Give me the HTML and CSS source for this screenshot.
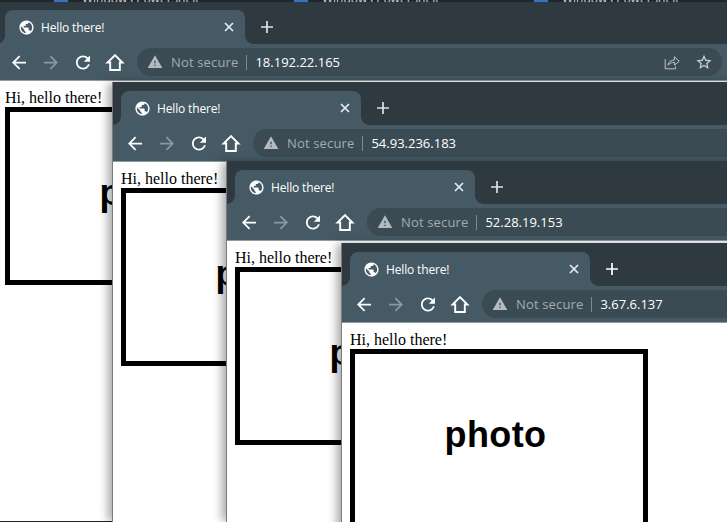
FILE: index.html
```html
<!DOCTYPE html>
<html lang="en">
<head>
  <meta charset="UTF-8">
  <title>Hello there!</title>
  <link rel="stylesheet" href="styles.css">
</head>
<body>
  <svg class="sprite" width="0" height="0">
    <symbol id="globe" viewBox="0 0 24 24"><path fill="currentColor" d="M12 2C6.48 2 2 6.48 2 12s4.48 10 10 10 10-4.48 10-10S17.52 2 12 2zm-1 17.93c-3.95-.49-7-3.85-7-7.93 0-.62.08-1.21.21-1.79L9 15v1c0 1.1.9 2 2 2v1.93zm6.9-2.54c-.26-.81-1-1.39-1.9-1.39h-1v-3c0-.55-.45-1-1-1H8v-2h2c.55 0 1-.45 1-1V7h2c1.1 0 2-.9 2-2v-.41c2.93 1.19 5 4.06 5 7.41 0 2.08-.8 3.97-2.1 5.39z"/></symbol>
    <symbol id="close" viewBox="0 0 12 12"><path stroke="currentColor" stroke-width="1.7" fill="none" d="M2 2l8 8M10 2l-8 8"/></symbol>
    <symbol id="plus" viewBox="0 0 12 12"><path stroke="currentColor" stroke-width="1.7" fill="none" d="M6 0v12M0 6h12"/></symbol>
    <symbol id="arrow" viewBox="0 0 24 24"><path fill="currentColor" d="M20 11H7.83l5.59-5.59L12 4l-8 8 8 8 1.41-1.41L7.83 13H20v-2z"/></symbol>
    <symbol id="reload" viewBox="0 0 24 24"><path fill="currentColor" d="M17.65 6.35C16.2 4.9 14.21 4 12 4c-4.42 0-7.99 3.58-7.99 8s3.57 8 7.99 8c3.73 0 6.84-2.55 7.73-6h-2.08c-.82 2.33-3.04 4-5.65 4-3.31 0-6-2.69-6-6s2.69-6 6-6c1.66 0 3.14.69 4.22 1.78L13 11h7V4l-2.35 2.35z"/></symbol>
    <symbol id="home" viewBox="0 0 24 24"><path fill="none" stroke="currentColor" stroke-width="2.2" d="M12 3.5 3.5 12h3v8.5h11V12h3z"/></symbol>
    <symbol id="warn" viewBox="0 0 24 24"><path fill="currentColor" d="M1 21h22L12 2 1 21zm12-3h-2v-2h2v2zm0-4h-2v-4h2v4z"/></symbol>
    <symbol id="share" viewBox="0 0 20 20"><path fill="none" stroke="currentColor" stroke-width="1.2" d="M1.5 6.500v12h13v-3M5 14c.5-4 3.500-6.500 8-6.500V3.500l6 5.500-6 5v-3.500c-3.500 0-6 1-8 3.500z"/></symbol>
    <symbol id="star" viewBox="0 0 24 24"><path fill="none" stroke="currentColor" stroke-width="2" d="M12 3.500l2.600 5.900 6.400.6-4.800 4.300 1.400 6.300L12 17.300l-5.600 3.300 1.400-6.300L3 10l6.400-.6z"/></symbol>
  </svg>

  <div class="desktop">
    <section class="window window-one">
      <div class="tabstrip">
        <div class="tab">
          <svg class="favicon"><use href="#globe"/></svg>
          <span class="tab-title">Hello there!</span>
          <svg class="tab-close"><use href="#close"/></svg>
        </div>
        <svg class="new-tab"><use href="#plus"/></svg>
      </div>
      <div class="toolbar">
        <svg class="nav"><use href="#arrow"/></svg>
        <svg class="nav nav-off flip"><use href="#arrow"/></svg>
        <svg class="nav"><use href="#reload"/></svg>
        <svg class="nav"><use href="#home"/></svg>
        <div class="omnibox">
          <svg class="warn"><use href="#warn"/></svg>
          <span class="not-secure">Not secure</span>
          <span class="address">18.192.22.165</span>
          <svg class="omni-icon share"><use href="#share"/></svg>
          <svg class="omni-icon"><use href="#star"/></svg>
        </div>
      </div>
      <div class="page">
        <div class="greeting">Hi, hello there!</div>
        <div class="photo">photo</div>
      </div>
    </section>

    <section class="window window-two">
      <div class="tabstrip">
        <div class="tab">
          <svg class="favicon"><use href="#globe"/></svg>
          <span class="tab-title">Hello there!</span>
          <svg class="tab-close"><use href="#close"/></svg>
        </div>
        <svg class="new-tab"><use href="#plus"/></svg>
      </div>
      <div class="toolbar">
        <svg class="nav"><use href="#arrow"/></svg>
        <svg class="nav nav-off flip"><use href="#arrow"/></svg>
        <svg class="nav"><use href="#reload"/></svg>
        <svg class="nav"><use href="#home"/></svg>
        <div class="omnibox">
          <svg class="warn"><use href="#warn"/></svg>
          <span class="not-secure">Not secure</span>
          <span class="address">54.93.236.183</span>
        </div>
      </div>
      <div class="page">
        <div class="greeting">Hi, hello there!</div>
        <div class="photo">photo</div>
      </div>
    </section>

    <section class="window window-three">
      <div class="tabstrip">
        <div class="tab">
          <svg class="favicon"><use href="#globe"/></svg>
          <span class="tab-title">Hello there!</span>
          <svg class="tab-close"><use href="#close"/></svg>
        </div>
        <svg class="new-tab"><use href="#plus"/></svg>
      </div>
      <div class="toolbar">
        <svg class="nav"><use href="#arrow"/></svg>
        <svg class="nav nav-off flip"><use href="#arrow"/></svg>
        <svg class="nav"><use href="#reload"/></svg>
        <svg class="nav"><use href="#home"/></svg>
        <div class="omnibox">
          <svg class="warn"><use href="#warn"/></svg>
          <span class="not-secure">Not secure</span>
          <span class="address">52.28.19.153</span>
        </div>
      </div>
      <div class="page">
        <div class="greeting">Hi, hello there!</div>
        <div class="photo">photo</div>
      </div>
    </section>

    <section class="window window-four">
      <div class="tabstrip">
        <div class="tab">
          <svg class="favicon"><use href="#globe"/></svg>
          <span class="tab-title">Hello there!</span>
          <svg class="tab-close"><use href="#close"/></svg>
        </div>
        <svg class="new-tab"><use href="#plus"/></svg>
      </div>
      <div class="toolbar">
        <svg class="nav"><use href="#arrow"/></svg>
        <svg class="nav nav-off flip"><use href="#arrow"/></svg>
        <svg class="nav"><use href="#reload"/></svg>
        <svg class="nav"><use href="#home"/></svg>
        <div class="omnibox">
          <svg class="warn"><use href="#warn"/></svg>
          <span class="not-secure">Not secure</span>
          <span class="address">3.67.6.137</span>
        </div>
      </div>
      <div class="page">
        <div class="greeting">Hi, hello there!</div>
        <div class="photo">photo</div>
      </div>
    </section>

    <div class="taskbar">
      <span class="task-icon"></span><span class="task-label">Windows PowerShell</span>
      <span class="task-icon"></span><span class="task-label">Windows PowerShell</span>
      <span class="task-icon"></span><span class="task-label">Windows PowerShell</span>
    </div>
  </div>
</body>
</html>
```

FILE: styles.css
```css
html, body {
  margin: 0;
  padding: 0;
  background: #20272b;
}
.sprite {
  position: absolute;
}
.desktop {
  position: relative;
  width: 727px;
  height: 522px;
  overflow: hidden;
}

/* windows sit on the desktop where they were dragged */
.window {
  position: absolute;
  width: 731px;
  display: flex;
  flex-direction: column;
  background: #fff;
  border-left: 1px solid #7b7b7b;
  box-shadow: -5px 0 9px -1px rgba(0, 0, 0, 0.35);
}
.window-one {
  left: -4px;
  top: 1px;
  height: 520px;
}
.window-two {
  left: 112px;
  top: 82px;
  height: 440px;
}
.window-three {
  left: 226px;
  top: 161px;
  height: 361px;
}
.window-four {
  left: 341px;
  top: 243px;
  height: 300px;
}

.tabstrip {
  display: flex;
  flex: none;
  align-items: center;
  padding: 9px 0 0 8px;
  background: #2e3a40;
}
.tab {
  position: relative;
  display: flex;
  align-items: center;
  width: 240px;
  height: 34px;
  box-sizing: border-box;
  padding: 0 10px 0 13px;
  background: #455a64;
  border-radius: 8px 8px 0 0;
  color: #fff;
}
.tab::before, .tab::after {
  content: "";
  position: absolute;
  bottom: 0;
  width: 8px;
  height: 8px;
}
.tab::before {
  left: -8px;
  background: radial-gradient(circle at 0 0, transparent 7.5px, #455a64 8px);
}
.tab::after {
  right: -8px;
  background: radial-gradient(circle at 100% 0, transparent 7.5px, #455a64 8px);
}
.favicon {
  width: 17px;
  height: 17px;
  color: #fff;
  flex: none;
}
.tab-title {
  margin-left: 6px;
  font: 12px "Open Sans", sans-serif;
  letter-spacing: -0.15px;
  flex: 1;
}
.tab-close {
  width: 12px;
  height: 12px;
  color: #e8ebed;
  flex: none;
}
.new-tab {
  width: 12px;
  height: 12px;
  margin-left: 16px;
  color: #dde1e3;
}
.window-four .new-tab {
  color: #fff;
}

.toolbar {
  display: flex;
  flex: none;
  align-items: center;
  height: 36px;
  padding-left: 6px;
  background: #455a64;
}
.nav {
  width: 21px;
  height: 21px;
  padding: 0 5.5px;
  color: #fff;
  flex: none;
}
.nav-off {
  color: #8a989f;
}
.flip {
  transform: scaleX(-1);
}
.omnibox {
  display: flex;
  align-items: center;
  flex: 1;
  height: 28px;
  margin: 0 6px;
  padding: 0 10px;
  background: #3a4b54;
  border-radius: 14px;
  font: 13px "Open Sans", sans-serif;
}
.warn {
  width: 16px;
  height: 16px;
  color: #b4babd;
  flex: none;
}
.not-secure {
  margin-left: 8px;
  padding-right: 8px;
  color: #a3abb0;
  border-right: 1px solid #7d8a91;
  line-height: 15px;
  letter-spacing: 0.15px;
}
.address {
  margin-left: 8px;
  color: #fff;
  flex: 1;
}
.omni-icon {
  width: 16px;
  height: 16px;
  color: #c6cacc;
  flex: none;
}
.share {
  margin-right: 16px;
}

.page {
  flex: 1 0 auto;
  padding: 8px;
  background: #fff;
  border-top: 1px solid #8d9aa0;
  font: 16px/18px "Liberation Serif", serif;
  color: #000;
}
.photo {
  display: flex;
  align-items: center;
  justify-content: center;
  width: 298px;
  height: 178px;
  box-sizing: border-box;
  padding: 0 7px 6px 0;
  border: 5px solid #000;
  font: bold 36px "Liberation Sans", sans-serif;
  letter-spacing: 0.4px;
}

.taskbar {
  position: absolute;
  left: 0;
  top: 0;
  width: 727px;
  height: 2px;
  overflow: hidden;
  display: flex;
  background: #20272b;
  font: 12px/4px "Open Sans", sans-serif;
  color: #cfd3d6;
  white-space: nowrap;
}
.task-icon {
  flex: none;
  width: 14px;
  height: 2px;
  margin-left: 101px;
  background: #3a6fc4;
}
.task-icon:first-child {
  margin-left: 54px;
}
.task-label {
  flex: none;
  width: 111px;
  margin: -3px 0 0 14px;
}
```
